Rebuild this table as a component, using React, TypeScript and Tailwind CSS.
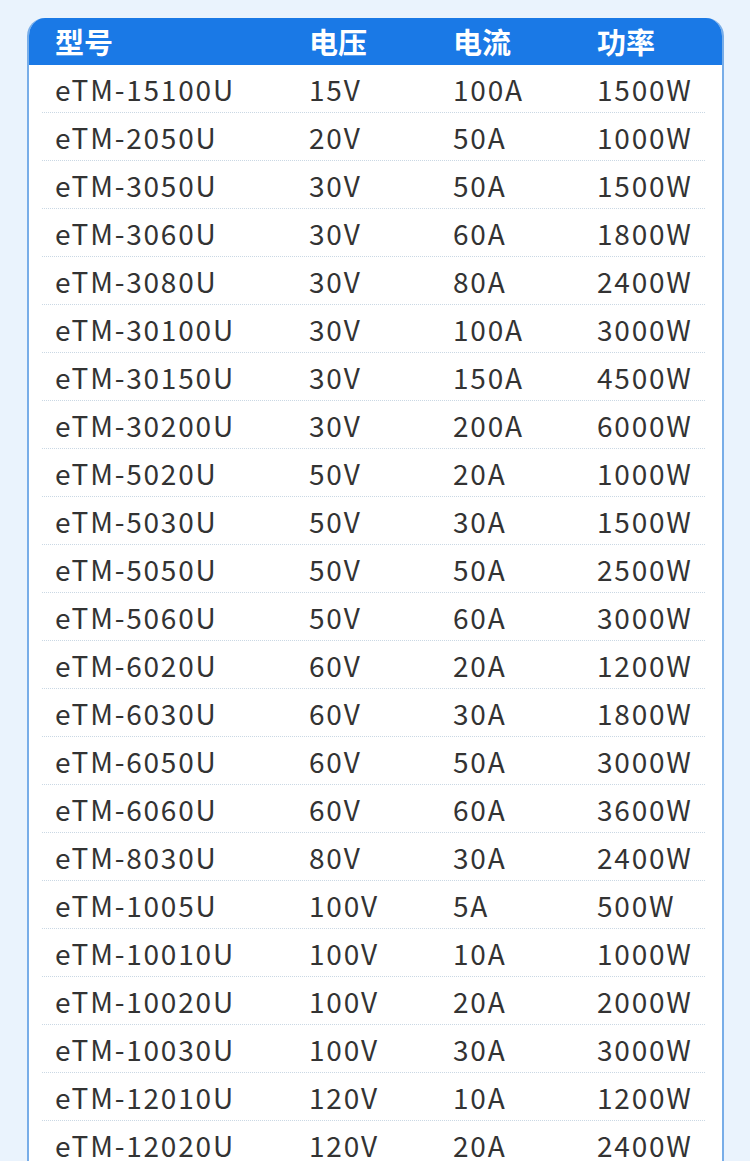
import React from "react";

const rows: [string, string, string, string][] = [
  ["eTM-15100U", "15V", "100A", "1500W"],
  ["eTM-2050U", "20V", "50A", "1000W"],
  ["eTM-3050U", "30V", "50A", "1500W"],
  ["eTM-3060U", "30V", "60A", "1800W"],
  ["eTM-3080U", "30V", "80A", "2400W"],
  ["eTM-30100U", "30V", "100A", "3000W"],
  ["eTM-30150U", "30V", "150A", "4500W"],
  ["eTM-30200U", "30V", "200A", "6000W"],
  ["eTM-5020U", "50V", "20A", "1000W"],
  ["eTM-5030U", "50V", "30A", "1500W"],
  ["eTM-5050U", "50V", "50A", "2500W"],
  ["eTM-5060U", "50V", "60A", "3000W"],
  ["eTM-6020U", "60V", "20A", "1200W"],
  ["eTM-6030U", "60V", "30A", "1800W"],
  ["eTM-6050U", "60V", "50A", "3000W"],
  ["eTM-6060U", "60V", "60A", "3600W"],
  ["eTM-8030U", "80V", "30A", "2400W"],
  ["eTM-1005U", "100V", "5A", "500W"],
  ["eTM-10010U", "100V", "10A", "1000W"],
  ["eTM-10020U", "100V", "20A", "2000W"],
  ["eTM-10030U", "100V", "30A", "3000W"],
  ["eTM-12010U", "120V", "10A", "1200W"],
  ["eTM-12020U", "120V", "20A", "2400W"],
];

export default function App() {
  return (
    <div
      className="w-[750px] h-[1161px] overflow-hidden bg-[#eaf3fd] pt-[18px] pl-[27px]"
      style={{ fontFamily: '"Noto Sans CJK SC", "Noto Sans", sans-serif' }}
    >
      <div className="w-[697px] rounded-t-[18px] bg-white border-x-2 border-[#78ade8] overflow-hidden">
        <div className="h-[47px] bg-[#1a79e6] -mx-[2px] grid grid-cols-[254px_144px_144px_1fr] pl-[28px] items-center text-white font-bold text-[29px] leading-none">
          <span>型号</span>
          <span>电压</span>
          <span>电流</span>
          <span>功率</span>
        </div>
        <div className="mx-[13px] mr-[17px]">
          {rows.map((r, i) => (
            <div
              key={i}
              className="h-[48px] border-b border-dotted border-[#cad8e4] grid grid-cols-[254px_144px_144px_1fr] pl-[13px] items-center text-[#333333] text-[28px] tracking-[1.8px] leading-none"
            >
              <span>{r[0]}</span>
              <span>{r[1]}</span>
              <span>{r[2]}</span>
              <span>{r[3]}</span>
            </div>
          ))}
        </div>
      </div>
    </div>
  );
}
